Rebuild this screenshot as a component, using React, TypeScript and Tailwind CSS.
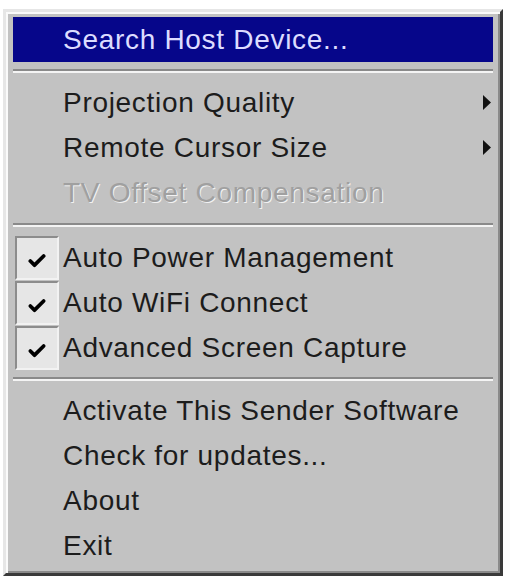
import { Check } from "lucide-react";

type Item = {
  label: string;
  submenu?: boolean;
  disabled?: boolean;
  checked?: boolean;
};

const viewItems: Item[] = [
  { label: "Projection Quality", submenu: true },
  { label: "Remote Cursor Size", submenu: true },
  { label: "TV Offset Compensation", disabled: true },
];

const toggleItems: Item[] = [
  { label: "Auto Power Management", checked: true },
  { label: "Auto WiFi Connect", checked: true },
  { label: "Advanced Screen Capture", checked: true },
];

const appItems: Item[] = [
  { label: "Activate This Sender Software" },
  { label: "Check for updates..." },
  { label: "About" },
  { label: "Exit" },
];

function Separator({ className = "" }: { className?: string }) {
  return (
    <div className={`flex flex-col justify-center ${className}`}>
      <div className="h-[2px] bg-[#8a8a8a]" />
      <div className="h-[2px] bg-[#f4f4f4]" />
    </div>
  );
}

function MenuRow({ item }: { item: Item }) {
  return (
    <div className="h-[45px] flex items-center relative">
      <div className="w-[50px] h-full flex items-center pl-[2px]">
        {item.checked && (
          <div className="w-[44px] h-[44px] bg-[#e6e6e6] border-t-2 border-l-2 border-t-[#8c8c8c] border-l-[#8c8c8c] border-b-2 border-r-2 border-b-[#f2f2f2] border-r-[#f2f2f2] flex items-center justify-center pt-[6px]">
            <Check size={20} strokeWidth={4.5} className="text-black" />
          </div>
        )}
      </div>
      <span
        className={
          item.disabled
            ? "text-[#a0a0a0] [text-shadow:1px_1px_0_#f2f2f2]"
            : "text-[#1c1c1c]"
        }
      >
        {item.label}
      </span>
      {item.submenu && (
        <svg
          width="8"
          height="15"
          viewBox="0 0 8 15"
          className="absolute right-[2px] top-[15px]"
        >
          <path d="M0 0 L8 7.5 L0 15 Z" fill="#111" />
        </svg>
      )}
    </div>
  );
}

export default function App() {
  return (
    <div className="w-[506px] h-[579px] bg-white pl-[3px] pt-[9px]">
      <div className="w-[500px] h-[567px] bg-[#c2c2c2] border-t-[3px] border-l-[3px] border-t-[#e6e6e6] border-l-[#e6e6e6] border-r-[3px] border-b-[3px] border-r-[#3a3a3a] border-b-[#3a3a3a] shadow-[inset_2px_2px_0_#fafafa,inset_-2px_-2px_0_#8a8a8a] px-[7px] pt-[5px] font-['Liberation_Sans',Arial,sans-serif] text-[28px] tracking-[0.7px] leading-none">
        <div className="h-[45px] bg-[#06068a] text-[#dcdcff] flex items-center pl-[50px]">
          Search Host Device...
        </div>
        <Separator className="h-[18px]" />
        {viewItems.map((item) => (
          <MenuRow key={item.label} item={item} />
        ))}
        <Separator className="h-[20px]" />
        {toggleItems.map((item) => (
          <MenuRow key={item.label} item={item} />
        ))}
        <Separator className="h-[18px]" />
        {appItems.map((item) => (
          <MenuRow key={item.label} item={item} />
        ))}
      </div>
    </div>
  );
}
